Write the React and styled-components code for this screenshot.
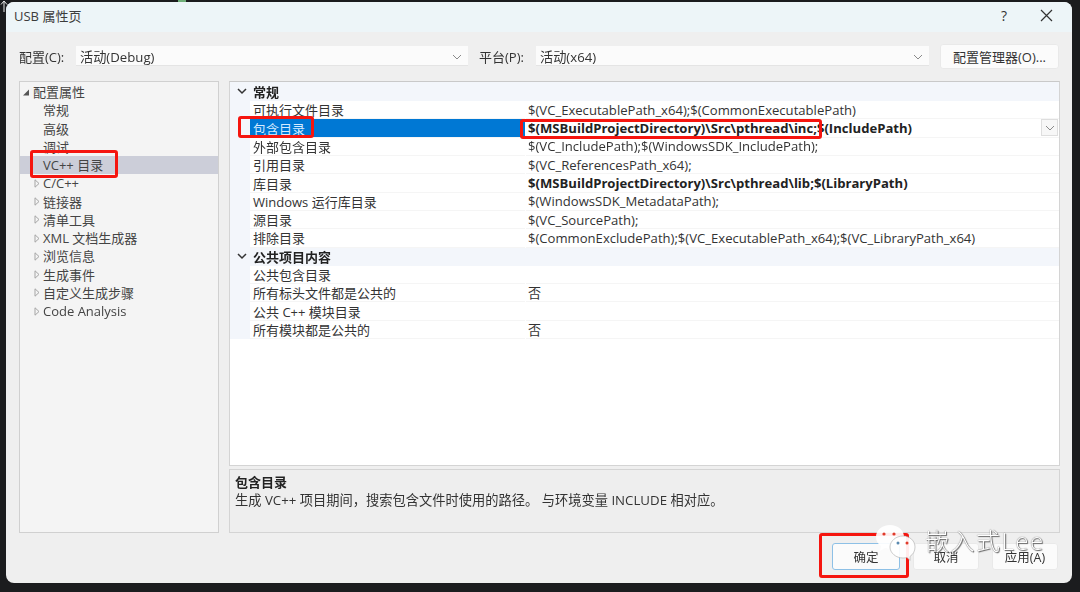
import React from "react";
import styled, { createGlobalStyle } from "styled-components";

const FONT = `"Open Sans", "Noto Sans", "Noto Sans CJK SC", sans-serif`;

const Global = createGlobalStyle`
  html, body { margin: 0; padding: 0; background: #1b1c1e; }
  body { width: 1080px; height: 592px; overflow: hidden; font-family: ${FONT}; }
  #root { width: 1080px; height: 592px; }
`;

const Page = styled.div`
  width: 1080px; height: 592px; padding: 2px 0 0 6px; box-sizing: border-box; position: relative;
`;
const Dialog = styled.div`
  width: 1066px; height: 581px; background: #efefef; border-radius: 8px; overflow: hidden;
  display: flex; flex-direction: column; color: #333; font-size: 13px; filter: blur(0.35px);
`;
const TitleBar = styled.div`
  height: 30px; flex: none; background: #edf5f8; display: flex; align-items: center;
  padding: 0 16px 4px 8px; box-sizing: border-box; font-size: 13px; color: #3c3c3c;
`;
const TitleText = styled.div`flex: 1;`;
const TitleBtn = styled.button`
  border: 0; background: none; padding: 0; width: 20px; height: 20px; margin-left: 22px;
  display: flex; align-items: center; justify-content: center; color: #333; font: 14px ${FONT};
`;
const ConfigRow = styled.div`
  flex: none; height: 24px; margin-top: 12px; padding: 0 13px; display: flex; align-items: center;
`;
const Label = styled.span`
  width: ${p => p.$w}px; flex: none; font-size: 13px; color: #333;
`;
const Select = styled.div`
  width: ${p => p.$w}px; height: 20px; flex: none; background: #fbfbfb; display: flex; align-items: center;
  justify-content: space-between; padding: 2px 6px 0 4px; box-sizing: border-box; border-bottom: 1px solid #e4e4e4;
  margin-right: ${p => p.$mr}px; color: #333; font-size: 13.2px;
`;
const Button = styled.button`
  box-sizing: border-box; height: ${p => p.$h}px; width: ${p => p.$w}px; flex: none; padding: 0;
  background: #fbfbfb; border: 1px solid ${p => (p.$primary ? "#8dc0e6" : "#e9e9e9")}; border-radius: 3px;
  font: ${p => p.$fs}px ${FONT}; color: #333;
`;
const Main = styled.div`
  flex: none; height: 452px; margin-top: 13px; padding: 0 12px 0 13px; display: flex; gap: 10px;
`;
const Tree = styled.div`
  width: 200px; height: 452px; box-sizing: border-box; flex: none; background: #f4f4f4; border: 1px solid #d0d0d0;
  padding-top: 1px;
`;
const TreeRow = styled.div`
  height: 18.25px; line-height: 18.25px; display: flex; align-items: center; white-space: nowrap;
  padding-left: ${p => p.$indent}px; font-size: 13px; color: #444;
  background: ${p => (p.$sel ? "#ccced9" : "transparent")};
`;
const Caret = styled.svg`width: 6px; height: 9px; margin-right: 3px; flex: none;`;
const CaretOpen = styled(Caret)`margin-right: 4px;`;
const Right = styled.div`flex: 1; display: flex; flex-direction: column; gap: 3px; min-width: 0;`;
const Grid = styled.div`
  height: 385px; box-sizing: border-box; background: #fff; border: 1px solid #d4d4d4; border-top-color: #c9c9c9;
`;
const Section = styled.div`
  height: ${p => p.$h}px; background: #f3f6fb; display: flex; align-items: center; font-weight: 700; color: #222; font-size: 13px;
`;
const SecIcon = styled.svg`width: 10px; height: 7px; margin: 0 6px 0 7px; flex: none;`;
const Row = styled.div`
  height: 18.3px; display: flex; align-items: stretch; font-size: 13px; color: #333; position: relative;
  background: #fff;
`;
const Gutter = styled.div`width: 20px; flex: none; background: #f3f6fb;`;
const Name = styled.div`
  width: 275px; flex: none; display: flex; align-items: center; padding-left: 3px; box-sizing: border-box; white-space: nowrap;
  background: ${p => (p.$sel ? "#0078d4" : "#fff")}; color: ${p => (p.$sel ? "#d6ebff" : "#333")};
  border-bottom: 1px solid #f5f5f5;
`;
const Value = styled.div`
  flex: 1; display: flex; align-items: center; padding-left: 2px; margin-left: 1px; white-space: nowrap; font-size: 13.1px;
  font-weight: ${p => (p.$bold ? 700 : 400)}; color: ${p => (p.$bold ? "#222" : "#333")};
  border-bottom: 1px solid #f5f5f5;
`;
const DropBtn = styled.div`
  position: absolute; right: 1px; top: 0; width: 17px; height: 17px; background: #f7f7f7; border: 1px solid #dedede;
  box-sizing: border-box; display: flex; align-items: center; justify-content: center;
`;
const Desc = styled.div`
  height: 64px; box-sizing: border-box; border: 1px solid #d4d4d4; padding: 3px 5px; background: #eee; font-size: 13.25px; line-height: 18px; color: #333;
`;
const DescTitle = styled.div`font-weight: 700; color: #222; font-size: 13px;`;
const Footer = styled.div`
  flex: none; display: flex; justify-content: flex-end; padding: 10px 14px 0 0; gap: 13px;
`;
const Mark = styled.div`
  position: absolute; border: 3px solid #f5150f; border-radius: 3px; box-sizing: border-box;
  left: ${p => p.$x}px; top: ${p => p.$y}px; width: ${p => p.$w}px; height: ${p => p.$h}px;
`;
const Watermark = styled.div`
  position: absolute; left: 875px; top: 524px; display: flex; align-items: center; gap: 8px;
`;
const WmText = styled.span`
  font: 300 24px ${FONT}; letter-spacing: 1.5px; color: #fff; line-height: 30px; margin-top: -4px;
  text-shadow: 0 0 1px #444, 1px 1px 1px #666;
`;
const CursorBit = styled.svg`position: absolute; left: 0; top: 0; width: 8px; height: 13px;`;
const TopGlint = styled.div`
  position: absolute; left: 178px; top: 0; width: 8px; height: 2px; background: #6fae78;
`;

const Chevron = () => (
  <svg width="10" height="6" viewBox="0 0 10 6"><path d="M1 1l4 4 4-4" fill="none" stroke="#8a8a8a" strokeWidth="1" /></svg>
);
const Closed = () => <Caret viewBox="0 0 6 9"><path d="M1 .8L5 4.5 1 8.2z" fill="none" stroke="#a5a5a5" /></Caret>;
const Open = () => <CaretOpen viewBox="0 0 6 9"><path d="M0 7.5L6 1.5v6z" fill="#555" /></CaretOpen>;
const SecChev = () => <SecIcon viewBox="0 0 10 7"><path d="M1 1l4 4 4-4" fill="none" stroke="#333" strokeWidth="1.5" /></SecIcon>;

const tree = [
  ["配置属性", 3, "open"], ["常规", 23], ["高级", 23], ["调试", 23], ["VC++ 目录", 23, null, true],
  ["C/C++", 14, "closed"], ["链接器", 14, "closed"], ["清单工具", 14, "closed"], ["XML 文档生成器", 14, "closed"],
  ["浏览信息", 14, "closed"], ["生成事件", 14, "closed"], ["自定义生成步骤", 14, "closed"], ["Code Analysis", 14, "closed"],
];
const general = [
  ["可执行文件目录", "$(VC_ExecutablePath_x64);$(CommonExecutablePath)"],
  ["包含目录", "$(MSBuildProjectDirectory)\\Src\\pthread\\inc;$(IncludePath)", true, true],
  ["外部包含目录", "$(VC_IncludePath);$(WindowsSDK_IncludePath);"],
  ["引用目录", "$(VC_ReferencesPath_x64);"],
  ["库目录", "$(MSBuildProjectDirectory)\\Src\\pthread\\lib;$(LibraryPath)", true],
  ["Windows 运行库目录", "$(WindowsSDK_MetadataPath);"],
  ["源目录", "$(VC_SourcePath);"],
  ["排除目录", "$(CommonExcludePath);$(VC_ExecutablePath_x64);$(VC_LibraryPath_x64)"],
];
const pub = [["公共包含目录", ""], ["所有标头文件都是公共的", "否"], ["公共 C++ 模块目录", ""], ["所有模块都是公共的", "否"]];

const Rows = ({ items }) => items.map(([n, v, bold, sel]) => (
  <Row key={n}>
    <Gutter />
    <Name $sel={sel}>{n}</Name>
    <Value $bold={bold}>{v}</Value>
    {sel && <DropBtn><Chevron /></DropBtn>}
  </Row>
));

export default function App() {
  return (
    <Page>
      <Global />
      <Dialog>
        <TitleBar>
          <TitleText>USB 属性页</TitleText>
          <TitleBtn>?</TitleBtn>
          <TitleBtn>
            <svg width="13" height="13" viewBox="0 0 13 13"><path d="M1 1l11 11M12 1L1 12" stroke="#333" strokeWidth="1.2" /></svg>
          </TitleBtn>
        </TitleBar>
        <ConfigRow>
          <Label $w={57}>配置(C):</Label>
          <Select $w={392} $mr={11}>活动(Debug)<Chevron /></Select>
          <Label $w={57}>平台(P):</Label>
          <Select $w={393} $mr={11}>活动(x64)<Chevron /></Select>
          <Button $w={119} $h={25} $fs={13}>配置管理器(O)...</Button>
        </ConfigRow>
        <Main>
          <Tree>
            {tree.map(([t, i, c, s]) => (
              <TreeRow key={t} $indent={i} $sel={s}>
                {c === "open" && <Open />}{c === "closed" && <Closed />}{t}
              </TreeRow>
            ))}
          </Tree>
          <Right>
            <Grid>
              <Section $h={19.2}><SecChev />常规</Section>
              <Rows items={general} />
              <Section $h={18.3}><SecChev />公共项目内容</Section>
              <Rows items={pub} />
            </Grid>
            <Desc>
              <DescTitle>包含目录</DescTitle>
              生成 VC++ 项目期间，搜索包含文件时使用的路径。 与环境变量 INCLUDE 相对应。
            </Desc>
          </Right>
        </Main>
        <Footer>
          <Button $primary $w={68} $h={27} $fs={12.5}>确定</Button>
          <Button $w={66} $h={27} $fs={12.5}>取消</Button>
          <Button $w={66} $h={27} $fs={12.5}>应用(A)</Button>
        </Footer>
      </Dialog>
      <CursorBit viewBox="0 0 8 13">
        <path d="M4 1L1 4.500M4 1l3 3.500M4 1v11" fill="none" stroke="#e8e8e8" strokeWidth="1" />
      </CursorBit>
      <TopGlint />
      <Mark $x={238} $y={116} $w={76} $h={22} />
      <Mark $x={30} $y={150} $w={88} $h={28} />
      <Mark $x={520} $y={119} $w={302} $h={20} />
      <Mark $x={819} $y={533} $w={90} $h={45} />
      <Watermark>
        <svg width="42" height="38" viewBox="0 0 42 38">
          <path d="M15 1C7 1 1 6 1 13c0 4 2 7 5 9l-1 5 5-3c2 .6 3 .8 5 .8 8 0 14-5 14-11.800S23 1 15 1z" fill="#fff" fillOpacity=".92" />
          <circle cx="9" cy="10" r="1.600" fill="#e03a2a" />
          <circle cx="19" cy="10" r="1.600" fill="#e03a2a" />
          <path d="M28 12c-7 0-13 5-13 11s6 11 13 11c1.500 0 3-.2 4-.6l3 3 0-4c3-2 5-5 5-9.400 0-6-5-11-12-11z" fill="#fff" fillOpacity=".92" stroke="#aaa" strokeWidth=".6" />
          <circle cx="23" cy="19" r="1.500" fill="#5a8ab0" />
          <circle cx="32" cy="19" r="1.500" fill="#e03a2a" />
        </svg>
        <WmText>嵌入式Lee</WmText>
      </Watermark>
    </Page>
  );
}
